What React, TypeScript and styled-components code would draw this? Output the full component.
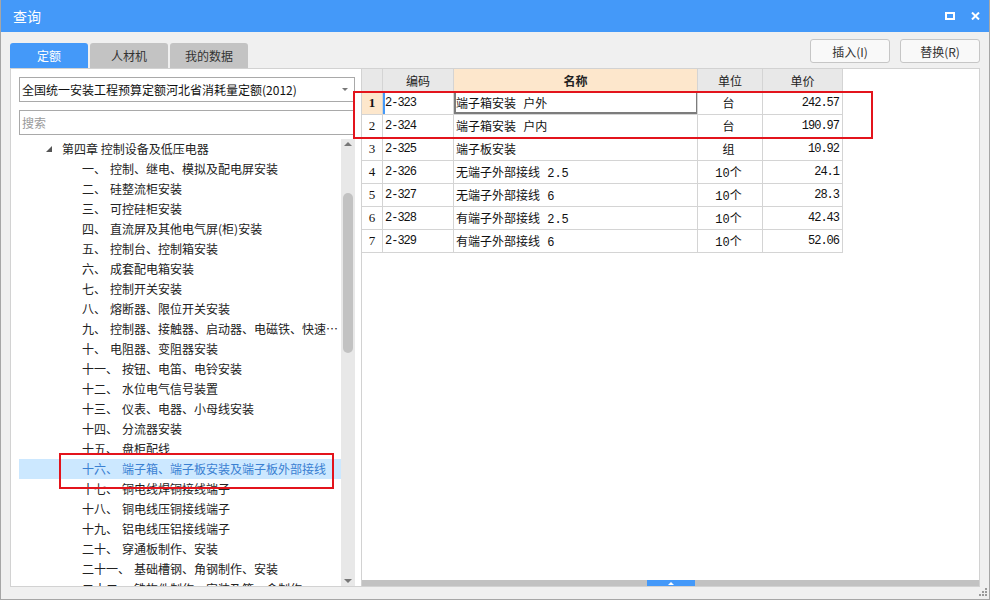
import * as React from "react";
import styled, { createGlobalStyle } from "styled-components";

const GlobalStyle = createGlobalStyle`
  html, body {
    margin: 0;
    padding: 0;
    background: #f0f0f0;
  }
  body {
    font-family: "Noto Sans CJK SC", "Noto Sans", sans-serif;
    font-size: 12px;
    color: #222;
  }
`;

const BLUE = "#4499f9";
const GRID = "#d4d4d4";
const RED = "#e3141c";

const Window = styled.div`
  position: relative;
  width: 990px;
  height: 600px;
  box-sizing: border-box;
  display: flex;
  flex-direction: column;
  background: #f0f0f0;
  border: 1px solid #a6a6a6;
  border-top: none;
`;

const TitleBar = styled.div`
  height: 32px;
  flex: none;
  display: flex;
  align-items: center;
  justify-content: space-between;
  padding: 0 9px 0 12px;
  background: ${BLUE};
  color: #fff;
  font-size: 14px;
`;

const TitleActions = styled.div`
  display: flex;
  align-items: center;
  gap: 16px;
`;

const Main = styled.div`
  flex: 1;
  min-height: 0;
  display: grid;
  grid-template-columns: 351px 619px;
  grid-template-rows: 36px 1fr;
  padding: 0 9px 12px 9px;
`;

const Tabs = styled.div`
  display: flex;
  align-items: flex-end;
  gap: 2px;
`;

const Tab = styled.div<{ $active?: boolean }>`
  width: 78px;
  height: 25px;
  display: flex;
  align-items: center;
  justify-content: center;
  border-radius: 3px 3px 0 0;
  background: ${(p) => (p.$active ? BLUE : "#c3c3c3")};
  color: ${(p) => (p.$active ? "#fff" : "#333")};
  font-size: 12px;
`;

const Actions = styled.div`
  display: flex;
  align-items: flex-end;
  justify-content: flex-end;
  gap: 10px;
  padding-bottom: 5px;
`;

const Button = styled.button`
  width: 80px;
  height: 24px;
  padding: 0;
  border: 1px solid #c6c6c6;
  border-radius: 3px;
  background: #f9f9f9;
  color: #333;
  font-family: "Noto Sans CJK SC", "Noto Sans", sans-serif;
  font-size: 12px;
`;

const LeftPanel = styled.div`
  display: flex;
  flex-direction: column;
  min-height: 0;
  background: #fff;
  border: 1px solid #d2d2d2;
  border-right: none;
  padding-top: 8px;
`;

const Field = styled.div<{ $placeholder?: boolean }>`
  position: relative;
  height: 25px;
  box-sizing: border-box;
  margin: 0 6px 8px 8px;
  padding: 0 18px 0 2px;
  display: flex;
  align-items: center;
  border: 1px solid #a9a9a9;
  color: ${(p) => (p.$placeholder ? "#9a9a9a" : "#111")};
  font-size: 12px;
  white-space: nowrap;
  overflow: hidden;
`;

const Caret = styled.span`
  position: absolute;
  right: 6px;
  top: 10px;
  width: 0;
  height: 0;
  border-left: 3px solid transparent;
  border-right: 3px solid transparent;
  border-top: 3px solid #777;
`;

const TreeArea = styled.div`
  flex: 1;
  min-height: 0;
  display: flex;
  margin-top: -4px;
  padding: 0 6px 0 8px;
  overflow: hidden;
`;

const TreeList = styled.div`
  flex: 1;
  min-width: 0;
  display: flex;
  flex-direction: column;
`;

const TreeRow = styled.div<{ $indent: number; $selected?: boolean }>`
  position: relative;
  flex: none;
  height: 20px;
  line-height: 20px;
  display: flex;
  align-items: center;
  padding-left: ${(p) => p.$indent}px;
  padding-right: 2px;
  background: ${(p) => (p.$selected ? "#cce8ff" : "transparent")};
  color: ${(p) => (p.$selected ? "#3a80d2" : "#222")};
  white-space: nowrap;
`;

const RowText = styled.span`
  overflow: hidden;
  text-overflow: ellipsis;
`;

const Expander = styled.svg`
  flex: none;
  margin-right: 10px;
`;

const Label = styled.span`
  margin-right: 4px;
`;

const Callout = styled.div<{ $top: number; $left: number; $w: number; $h: number }>`
  position: absolute;
  z-index: 2;
  top: ${(p) => p.$top}px;
  left: ${(p) => p.$left}px;
  width: ${(p) => p.$w}px;
  height: ${(p) => p.$h}px;
  box-sizing: border-box;
  border: 2px solid ${RED};
  pointer-events: none;
`;

const VScroll = styled.div`
  flex: none;
  width: 14px;
  display: flex;
  flex-direction: column;
  align-items: center;
  background: #e8e8e8;
`;

const ArrowBox = styled.div`
  height: 10px;
  flex: none;
  display: flex;
  align-items: center;
  justify-content: center;
`;

const Thumb = styled.div`
  width: 10px;
  height: 160px;
  margin-top: 44px;
  border-radius: 5px;
  background: #c2c2c2;
`;

const Spacer = styled.div`
  flex: 1;
`;

const RightPanel = styled.div`
  position: relative;
  display: flex;
  flex-direction: column;
  min-height: 0;
  background: #fff;
  border: 1px solid #d2d2d2;
`;

const Row = styled.div`
  display: grid;
  grid-template-columns: 21px 71px 244px 65px 80px;
  height: 23px;
`;

const HeadCell = styled.div<{ $accent?: boolean }>`
  display: flex;
  align-items: center;
  justify-content: center;
  border-right: 1px solid ${GRID};
  border-bottom: 1px solid ${GRID};
  background: ${(p) => (p.$accent ? "#fde7cc" : "#e8e8e8")};
  font-weight: ${(p) => (p.$accent ? 700 : 400)};
  font-size: 12px;
  color: #222;
`;

const Cell = styled.div<{
  $align?: "left" | "center" | "right";
  $tight?: boolean;
  $marker?: boolean;
  $current?: boolean;
  $picked?: boolean;
}>`
  display: flex;
  align-items: center;
  justify-content: ${(p) =>
    p.$align === "center" ? "center" : p.$align === "right" ? "flex-end" : "flex-start"};
  padding: 0 3px 0 ${(p) => (p.$align === "left" ? 2 : 0)}px;
  border-right: 1px solid ${GRID};
  border-bottom: 1px solid ${GRID};
  background: ${(p) => (p.$picked ? "#fde7cc" : "#fff")};
  font-family: "Liberation Mono", "Noto Sans CJK SC", monospace;
  font-size: 12px;
  letter-spacing: ${(p) => (p.$tight ? "-1px" : "0")};
  color: #111;
  white-space: nowrap;
  box-shadow: ${(p) =>
    p.$current
      ? `inset 0 1px 0 ${BLUE}, inset 2px 0 0 #7c7c7c, inset -1px 0 0 #7c7c7c, inset 0 -2px 0 #7c7c7c`
      : p.$marker
      ? `inset 2px 0 0 ${BLUE}`
      : "none"};
`;

const RowNo = styled(Cell)<{ $bold?: boolean }>`
  justify-content: center;
  padding: 0;
  font-family: "Liberation Serif", "DejaVu Serif", serif;
  font-size: 13px;
  font-weight: ${(p) => (p.$bold ? 700 : 400)};
`;

const HScroll = styled.div`
  flex: none;
  height: 6px;
  display: flex;
  justify-content: center;
  background: #c2c2c2;
`;

const HThumb = styled.div`
  width: 48px;
  display: flex;
  align-items: center;
  justify-content: center;
  background: ${BLUE};
`;

const Grip = styled.svg`
  position: absolute;
  right: 2px;
  bottom: 3px;
`;

const chapters: [string, string][] = [
  ["一", "控制、继电、模拟及配电屏安装"],
  ["二", "硅整流柜安装"],
  ["三", "可控硅柜安装"],
  ["四", "直流屏及其他电气屏(柜)安装"],
  ["五", "控制台、控制箱安装"],
  ["六", "成套配电箱安装"],
  ["七", "控制开关安装"],
  ["八", "熔断器、限位开关安装"],
  ["九", "控制器、接触器、启动器、电磁铁、快速自动开关、电阻器安装"],
  ["十", "电阻器、变阻器安装"],
  ["十一", "按钮、电笛、电铃安装"],
  ["十二", "水位电气信号装置"],
  ["十三", "仪表、电器、小母线安装"],
  ["十四", "分流器安装"],
  ["十五", "盘柜配线"],
  ["十六", "端子箱、端子板安装及端子板外部接线"],
  ["十七", "铜电线焊铜接线端子"],
  ["十八", "铜电线压铜接线端子"],
  ["十九", "铝电线压铝接线端子"],
  ["二十", "穿通板制作、安装"],
  ["二十一", "基础槽钢、角钢制作、安装"],
  ["二十二", "铁构件制作、安装及箱、盒制作"],
];

const items = [
  { code: "2-323", name: "端子箱安装 户外", unit: "台", price: "242.57" },
  { code: "2-324", name: "端子箱安装 户内", unit: "台", price: "190.97" },
  { code: "2-325", name: "端子板安装", unit: "组", price: "10.92" },
  { code: "2-326", name: "无端子外部接线 2.5", unit: "10个", price: "24.1" },
  { code: "2-327", name: "无端子外部接线 6", unit: "10个", price: "28.3" },
  { code: "2-328", name: "有端子外部接线 2.5", unit: "10个", price: "42.43" },
  { code: "2-329", name: "有端子外部接线 6", unit: "10个", price: "52.06" },
];

const App: React.FC = () => (
  <>
    <GlobalStyle />
    <Window>
      <TitleBar>
        <span>查询</span>
        <TitleActions>
          <svg width="10" height="8" viewBox="0 0 10 8">
            <rect x="1" y="1" width="8" height="6" fill="none" stroke="#fff" strokeWidth="2" />
          </svg>
          <svg width="9" height="8" viewBox="0 0 9 8">
            <path d="M1 0.5 L8 7.5 M8 0.5 L1 7.5" stroke="#fff" strokeWidth="2" />
          </svg>
        </TitleActions>
      </TitleBar>

      <Main>
        <Tabs>
          <Tab $active>定额</Tab>
          <Tab>人材机</Tab>
          <Tab>我的数据</Tab>
        </Tabs>
        <Actions>
          <Button>插入(I)</Button>
          <Button>替换(R)</Button>
        </Actions>

        <LeftPanel>
          <Field>
            全国统一安装工程预算定额河北省消耗量定额(2012)
            <Caret />
          </Field>
          <Field $placeholder>搜索</Field>
          <TreeArea>
            <TreeList>
              <TreeRow $indent={27}>
                <Expander width="6" height="6" viewBox="0 0 6 6">
                  <polygon points="6,0 6,6 0,6" fill="#555" />
                </Expander>
                <RowText>第四章 控制设备及低压电器</RowText>
              </TreeRow>
              {chapters.map(([num, text]) => (
                <TreeRow key={num} $indent={63} $selected={num === "十六"}>
                  <RowText>
                    <Label>{num}、</Label>
                    {text}
                  </RowText>
                  {num === "十六" && <Callout $top={-6} $left={40} $w={275} $h={36} />}
                </TreeRow>
              ))}
            </TreeList>
            <VScroll>
              <ArrowBox>
                <svg width="8" height="4" viewBox="0 0 8 4">
                  <polygon points="0,4 4,0 8,4" fill="#777" />
                </svg>
              </ArrowBox>
              <Thumb />
              <Spacer />
              <ArrowBox>
                <svg width="8" height="4" viewBox="0 0 8 4">
                  <polygon points="0,0 8,0 4,4" fill="#777" />
                </svg>
              </ArrowBox>
            </VScroll>
          </TreeArea>
        </LeftPanel>

        <RightPanel>
          <Row>
            <HeadCell />
            <HeadCell>编码</HeadCell>
            <HeadCell $accent>名称</HeadCell>
            <HeadCell>单位</HeadCell>
            <HeadCell>单价</HeadCell>
          </Row>
          {items.map((it, i) => (
            <Row key={it.code}>
              <RowNo $bold={i === 0} $picked={i === 0}>
                {i + 1}
              </RowNo>
              <Cell $align="left" $tight $marker={i === 0}>
                {it.code}
              </Cell>
              <Cell $align="left" $current={i === 0}>
                {it.name}
              </Cell>
              <Cell $align="center">{it.unit}</Cell>
              <Cell $align="right" $tight>
                {it.price}
              </Cell>
            </Row>
          ))}
          <Spacer />
          <HScroll>
            <HThumb>
              <svg width="6" height="3" viewBox="0 0 6 3">
                <polygon points="0,3 3,0 6,3" fill="#fff" />
              </svg>
            </HThumb>
          </HScroll>
          <Callout $top={22} $left={-9} $w={520} $h={48} />
        </RightPanel>
      </Main>

      <Grip width="8" height="8" viewBox="0 0 8 8">
        <rect x="6" y="0" width="2" height="2" fill="#9a9a9a" />
        <rect x="3" y="3" width="2" height="2" fill="#9a9a9a" />
        <rect x="6" y="3" width="2" height="2" fill="#9a9a9a" />
        <rect x="0" y="6" width="2" height="2" fill="#9a9a9a" />
        <rect x="3" y="6" width="2" height="2" fill="#9a9a9a" />
        <rect x="6" y="6" width="2" height="2" fill="#9a9a9a" />
      </Grip>
    </Window>
  </>
);

export default App;
